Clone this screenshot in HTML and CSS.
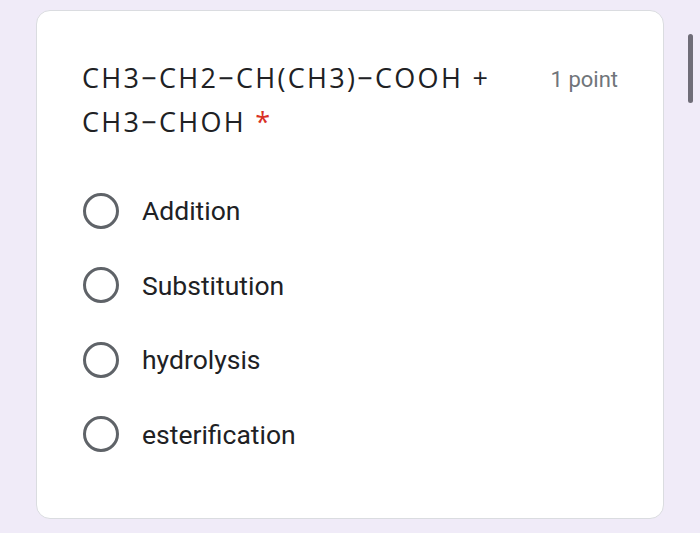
FILE: index.html
```html
<!DOCTYPE html>
<html>
<head>
<meta charset="utf-8">
<link rel="stylesheet" href="styles.css">
</head>
<body>
<div class="page">
  <div class="card">
    <div class="header">
      <div class="title"><span class="nw">CH3−CH2−CH(CH3)−COOH +</span> <span class="nw">CH3−CHOH <span class="req">*</span></span></div>
      <div class="points">1 point</div>
    </div>
    <div class="options">
      <div class="option"><span class="radio"></span><span class="label">Addition</span></div>
      <div class="option"><span class="radio"></span><span class="label">Substitution</span></div>
      <div class="option"><span class="radio"></span><span class="label">hydrolysis</span></div>
      <div class="option"><span class="radio"></span><span class="label">esterification</span></div>
    </div>
  </div>
  <div class="scrollbar"></div>
</div>
</body>
</html>
```
FILE: styles.css
```css
html, body {
  margin: 0;
  padding: 0;
  background: #f0ebf8;
}
.page {
  position: relative;
  width: 700px;
  height: 533px;
  padding: 10px 36px 0 36px;
  box-sizing: border-box;
}
.card {
  background: #ffffff;
  border: 1px solid #dadce0;
  border-radius: 14px;
  height: 509px;
  box-sizing: border-box;
  padding: 45px 45px 0 45px;
}
.header {
  display: flex;
  align-items: flex-start;
}
.title {
  flex: 1;
  font-family: "Open Sans", sans-serif;
  font-size: 27px;
  letter-spacing: 2.3px;
  line-height: 44px;
  color: #202124;
  margin-right: 30px;
}
.nw {
  white-space: nowrap;
}
.req {
  color: #d93025;
  letter-spacing: 0;
}
.points {
  font-family: Roboto, sans-serif;
  font-size: 22px;
  line-height: 44px;
  padding-top: 2px;
  color: #70757a;
  white-space: nowrap;
}
.options {
  display: flex;
  flex-direction: column;
  gap: 37.5px;
  margin-top: 48px;
}
.option {
  display: flex;
  align-items: center;
  height: 37px;
}
.radio {
  width: 30px;
  height: 30px;
  border: 3.5px solid #5f6368;
  border-radius: 50%;
  margin-left: 1px;
  margin-right: 23px;
}
.label {
  font-family: Roboto, sans-serif;
  font-size: 26.5px;
  color: #202124;
}
.scrollbar {
  position: absolute;
  left: 688px;
  top: 34px;
  width: 5px;
  height: 69px;
  border-radius: 3px;
  background: #6f6d78;
}
```
